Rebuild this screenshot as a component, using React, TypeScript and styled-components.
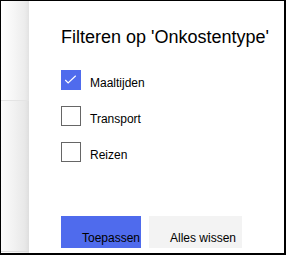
import React, { useState } from "react";
import styled, { createGlobalStyle } from "styled-components";

const Global = createGlobalStyle`
  html, body { margin: 0; padding: 0; background: #fff; }
  body { font-family: "Liberation Sans", Arial, sans-serif; }
  * { box-sizing: border-box; }
`;

const Frame = styled.div`
  width: 286px;
  height: 255px;
  display: flex;
  border-style: solid;
  border-color: #000;
  border-width: 1px 2px 2px 1px;
  background: #fff;
  overflow: hidden;
`;

const Backdrop = styled.div`
  width: 28px;
  flex: none;
  display: flex;
  flex-direction: column;
  background: linear-gradient(to right, #ffffff 0%, #f6f6f6 45%, #ececec 85%, #e2e2e2 100%);
`;

const BackdropTop = styled.div`
  height: 99px;
  flex: none;
`;

const BackdropRow = styled.div`
  flex: 1;
  border-top: 1px solid #e4e4e4;
  border-bottom: 1px solid #dcdcdc;
  margin-bottom: 1px;
  background: rgba(0, 0, 0, 0.015);
`;

const Panel = styled.div`
  flex: 1;
  display: flex;
  flex-direction: column;
  padding: 24px 0 0 32px;
  background: #fff;
`;

const Title = styled.h2`
  margin: 0;
  font-size: 18px;
  line-height: 24px;
  font-weight: 400;
  color: #000;
  white-space: nowrap;
`;

const List = styled.div`
  margin-top: 21px;
  display: flex;
  flex-direction: column;
  gap: 16px;
`;

const Row = styled.label`
  display: flex;
  align-items: flex-start;
  gap: 9px;
  height: 20px;
  cursor: pointer;
`;

const Box = styled.span<{ $checked: boolean }>`
  width: 20px;
  height: 20px;
  flex: none;
  display: flex;
  align-items: center;
  justify-content: center;
  border: 1px solid ${(p) => (p.$checked ? "#4f6bed" : "#666666")};
  background: ${(p) => (p.$checked ? "#4f6bed" : "#ffffff")};
`;

const Label = styled.span`
  font-size: 12px;
  line-height: 20px;
  padding-top: 3px;
  color: #000;
  white-space: nowrap;
`;

const Actions = styled.div`
  margin-top: 54px;
  display: flex;
  gap: 8px;
`;

const Button = styled.button<{ $primary?: boolean; $w: number }>`
  width: ${(p) => p.$w}px;
  height: 32px;
  border: none;
  margin: 0;
  padding: 12px 0 0 21px;
  text-align: left;
  font-family: "Liberation Sans", Arial, sans-serif;
  font-size: 12px;
  line-height: 16px;
  color: #000;
  white-space: nowrap;
  overflow: hidden;
  background: ${(p) => (p.$primary ? "#4f6bed" : "#f3f3f3")};
  cursor: pointer;
`;

const Check = () => (
  <svg width="20" height="20" viewBox="0 0 20 20" style={{ marginLeft: -1, marginTop: -1 }}>
    <path d="M4.5 10 L7.5 13 L15.5 5.5" fill="none" stroke="#fff" strokeWidth="1.2" />
  </svg>
);

const options = ["Maaltijden", "Transport", "Reizen"];

export default function App() {
  const [checked, setChecked] = useState<Record<string, boolean>>({ Maaltijden: true });
  return (
    <>
      <Global />
      <Frame>
        <Backdrop>
          <BackdropTop />
          <BackdropRow />
        </Backdrop>
        <Panel>
          <Title>Filteren op 'Onkostentype'</Title>
          <List>
            {options.map((o) => (
              <Row key={o} onClick={() => setChecked((c) => ({ ...c, [o]: !c[o] }))}>
                <Box $checked={!!checked[o]}>{checked[o] && <Check />}</Box>
                <Label>{o}</Label>
              </Row>
            ))}
          </List>
          <Actions>
            <Button $primary $w={80}>Toepassen</Button>
            <Button $w={93} onClick={() => setChecked({})}>Alles wissen</Button>
          </Actions>
        </Panel>
      </Frame>
    </>
  );
}
